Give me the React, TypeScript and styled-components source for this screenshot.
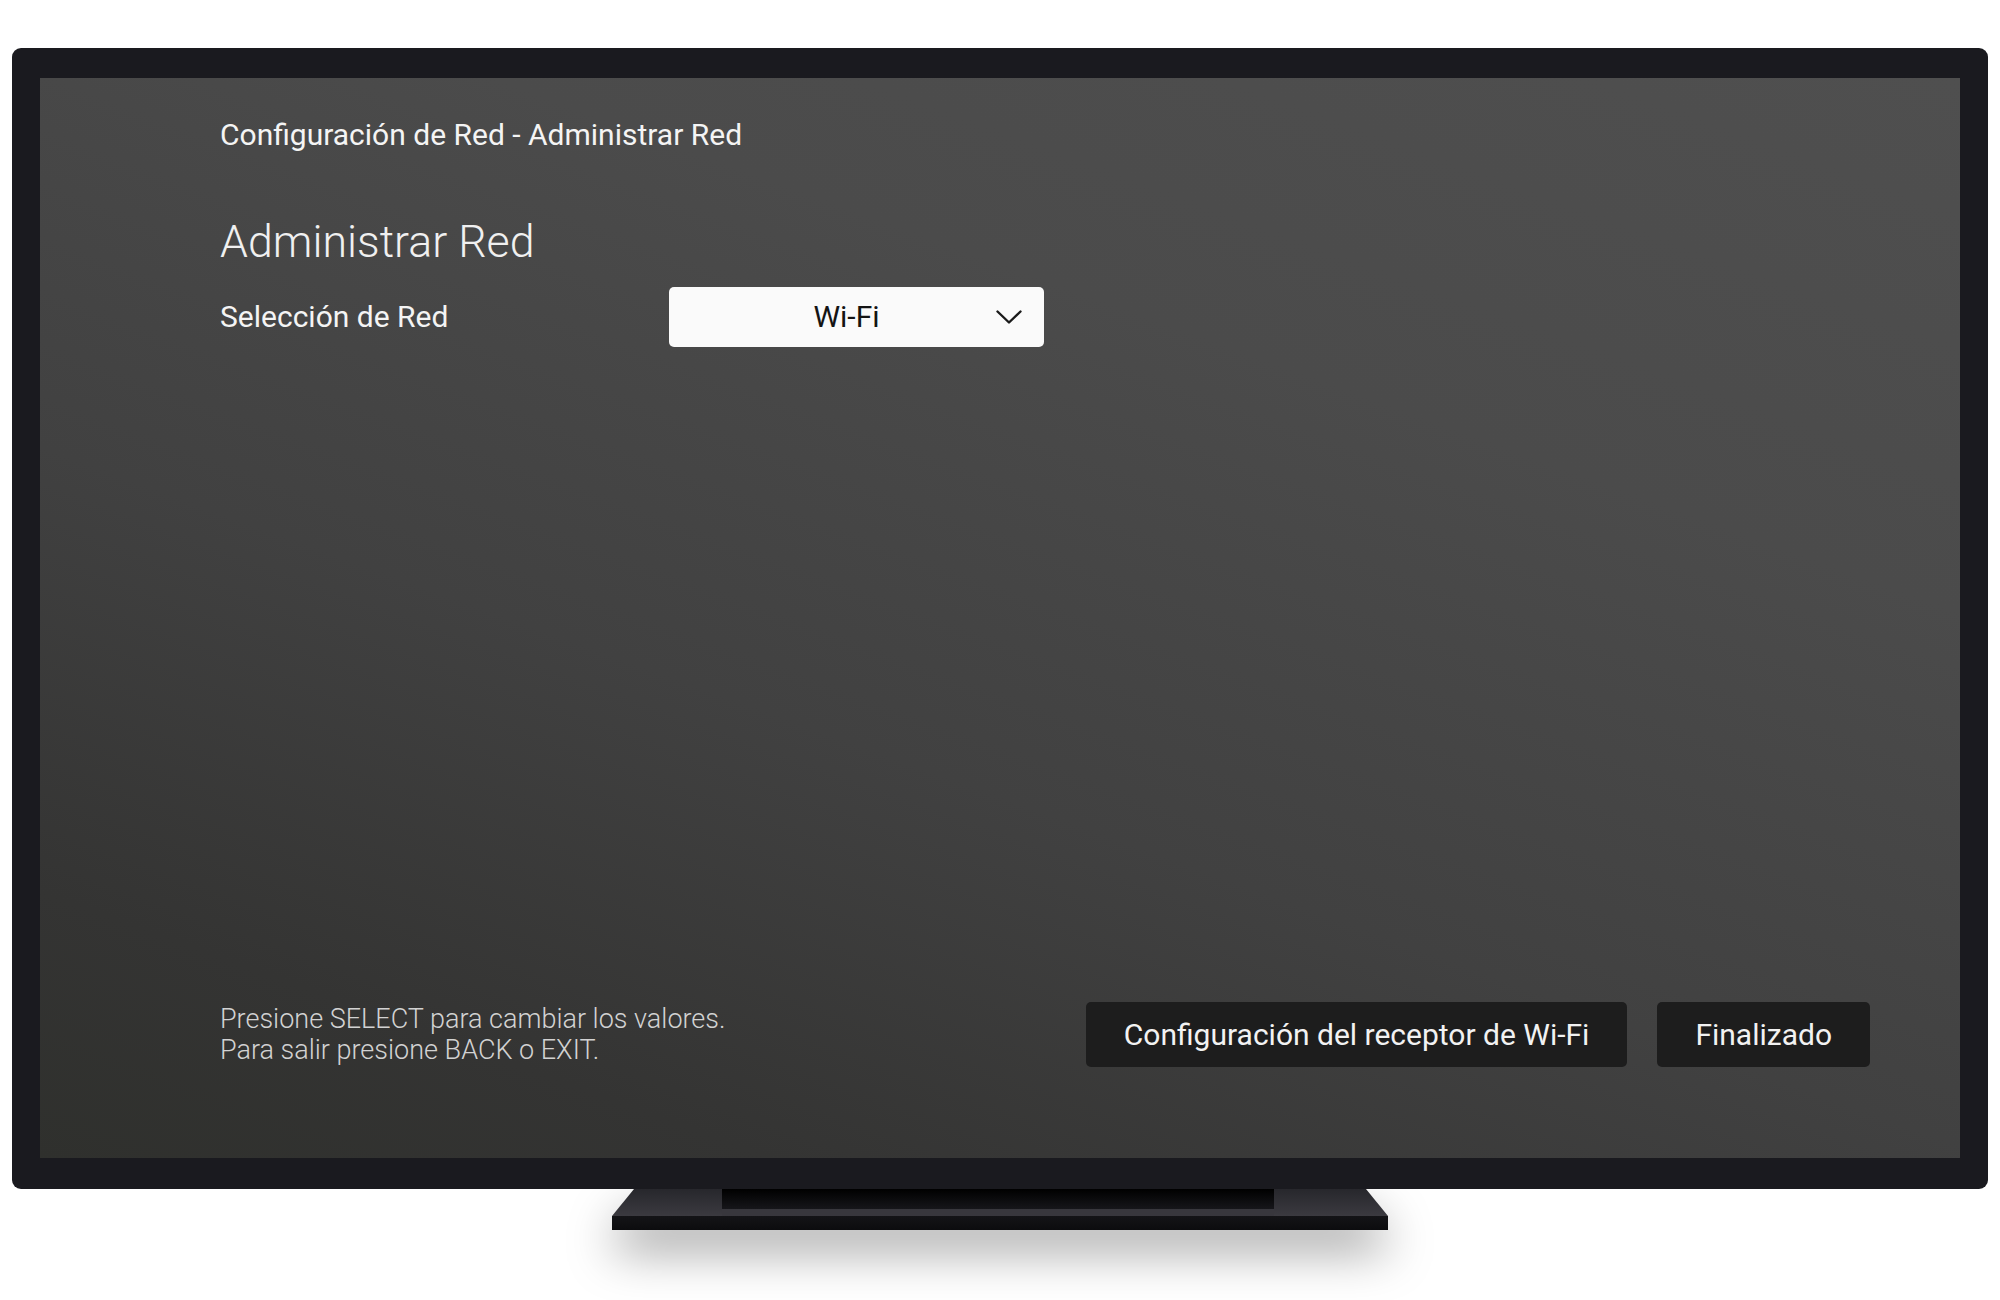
import React from "react";
import styled, { createGlobalStyle } from "styled-components";

const GlobalStyle = createGlobalStyle`
  html, body {
    margin: 0;
    padding: 0;
    background: #ffffff;
  }
  body {
    font-family: Roboto, "Liberation Sans", sans-serif;
  }
`;

const Page = styled.div`
  width: 2000px;
  height: 1300px;
  display: flex;
  flex-direction: column;
  align-items: center;
  padding-top: 48px;
  box-sizing: border-box;
  overflow: hidden;
`;

const Frame = styled.div`
  position: relative;
  z-index: 1;
  width: 1976px;
  box-sizing: border-box;
  padding: 30px 28px 31px 28px;
  background: #1a1a1f;
  border-radius: 9px;
`;

const Screen = styled.div`
  width: 1920px;
  height: 1080px;
  box-sizing: border-box;
  padding: 39px 90px 91px 180px;
  display: flex;
  flex-direction: column;
  background: linear-gradient(
    200deg,
    #4f4f4f 0%,
    #4b4b4b 30%,
    #414141 60%,
    #343433 85%,
    #2f302d 100%
  );
  color: #f2f2f2;
`;

const Breadcrumb = styled.div`
  font-size: 30px;
  line-height: 36px;
  font-weight: 400;
  color: #f4f4f4;
`;

const Title = styled.h1`
  margin: 61px 0 0 0;
  font-size: 44.7px;
  line-height: 56px;
  font-weight: 300;
  color: #f0f0f0;
`;

const FieldRow = styled.div`
  margin-top: 17px;
  display: flex;
  align-items: center;
`;

const FieldLabel = styled.div`
  width: 449px;
  font-size: 30px;
  line-height: 36px;
  color: #f4f4f4;
`;

const Dropdown = styled.div`
  width: 375px;
  height: 60px;
  box-sizing: border-box;
  padding: 0 22px 0 28px;
  display: flex;
  align-items: center;
  background: #fafafa;
  border-radius: 5px;
  color: #141414;
`;

const DropdownValue = styled.div`
  flex: 1;
  text-align: center;
  font-size: 30px;
  line-height: 36px;
`;

const Chevron = styled.svg`
  width: 26px;
  height: 15px;
  display: block;
`;

const BottomRow = styled.div`
  margin-top: auto;
  display: flex;
  align-items: center;
  justify-content: space-between;
`;

const HelpText = styled.div`
  font-size: 27px;
  line-height: 31px;
  font-weight: 300;
  color: #d2d2d2;
`;

const Actions = styled.div`
  display: flex;
  gap: 30px;
`;

const ActionButton = styled.div`
  height: 65px;
  box-sizing: border-box;
  padding: 0 38px;
  display: flex;
  align-items: center;
  background: #1d1d1d;
  border-radius: 5px;
  font-size: 30px;
  color: #f2f2f2;
`;

const Stand = styled.svg`
  display: block;
  width: 776px;
  height: 41px;
  filter: drop-shadow(0 22px 24px rgba(0, 0, 0, 0.35));
`;

export default function App() {
  return (
    <>
      <GlobalStyle />
      <Page>
        <Frame>
          <Screen>
            <Breadcrumb>Configuración de Red - Administrar Red</Breadcrumb>
            <Title>Administrar Red</Title>
            <FieldRow>
              <FieldLabel>Selección de Red</FieldLabel>
              <Dropdown>
                <DropdownValue>Wi-Fi</DropdownValue>
                <Chevron viewBox="0 0 26 15">
                  <polyline
                    points="1.5,1.5 13,12.5 24.5,1.5"
                    fill="none"
                    stroke="#1a1a1a"
                    strokeWidth="2.4"
                    strokeLinecap="round"
                    strokeLinejoin="round"
                  />
                </Chevron>
              </Dropdown>
            </FieldRow>
            <BottomRow>
              <HelpText>
                Presione SELECT para cambiar los valores.
                <br />
                Para salir presione BACK o EXIT.
              </HelpText>
              <Actions>
                <ActionButton>Configuración del receptor de Wi-Fi</ActionButton>
                <ActionButton>Finalizado</ActionButton>
              </Actions>
            </BottomRow>
          </Screen>
        </Frame>
        <Stand viewBox="0 0 776 41">
          <defs>
            <linearGradient id="trap" x1="0" y1="0" x2="0" y2="1">
              <stop offset="0" stopColor="#27272c" />
              <stop offset="1" stopColor="#3b3a40" />
            </linearGradient>
            <linearGradient id="neck" x1="0" y1="0" x2="0" y2="1">
              <stop offset="0" stopColor="#000000" />
              <stop offset="1" stopColor="#16161a" />
            </linearGradient>
            <linearGradient id="base" x1="0" y1="0" x2="0" y2="1">
              <stop offset="0" stopColor="#141417" />
              <stop offset="1" stopColor="#0c0c0e" />
            </linearGradient>
          </defs>
          <polygon points="22,0 754,0 776,27 0,27" fill="url(#trap)" />
          <rect x="110" y="0" width="552" height="20" fill="url(#neck)" />
          <rect x="110" y="20" width="552" height="7" fill="#38373d" />
          <rect x="0" y="27" width="776" height="14" fill="url(#base)" />
        </Stand>
      </Page>
    </>
  );
}
